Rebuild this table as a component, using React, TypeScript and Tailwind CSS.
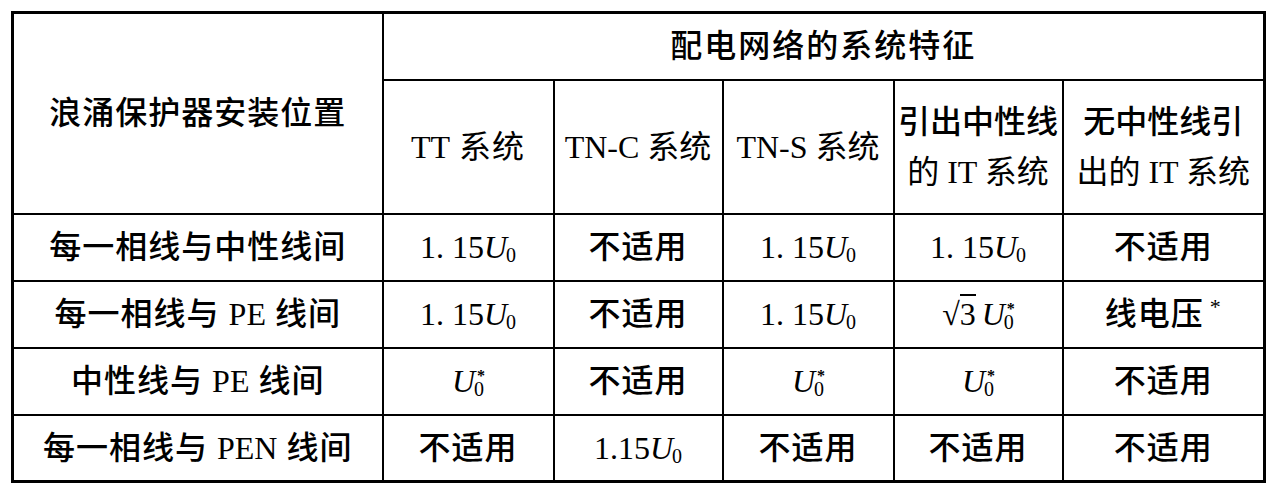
import type { ReactNode } from "react";

function U0({ star = false }: { star?: boolean }) {
  return (
    <span className="inline-flex items-end tracking-normal">
      <i className="italic">U</i>
      <span className="relative text-[20px] leading-none mb-[6px] -ml-[1px]">
        0
        {star && (
          <span className="absolute left-[3px] -top-[11px] text-[16px] font-bold leading-none">
            *
          </span>
        )}
      </span>
    </span>
  );
}

const NA = "不适用";
const V115 = (
  <span className="tracking-normal">
    1. 15
    <U0 />
  </span>
);

const rows: { label: ReactNode; cells: ReactNode[] }[] = [
  {
    label: "每一相线与中性线间",
    cells: [V115, NA, V115, V115, NA],
  },
  {
    label: (
      <>
        每一相线与 <span className="tracking-normal">PE</span> 线间
      </>
    ),
    cells: [
      V115,
      NA,
      V115,
      <span className="tracking-normal">
        <span>√</span>
        <span className="border-t-2 border-black leading-[1]">3</span>
        <span className="ml-[6px]">
          <U0 star />
        </span>
      </span>,
      <>
        线电压<span className="ml-[6px] text-[22px] align-top">*</span>
      </>,
    ],
  },
  {
    label: (
      <>
        中性线与 <span className="tracking-normal">PE</span> 线间
      </>
    ),
    cells: [<U0 star />, NA, <U0 star />, <U0 star />, NA],
  },
  {
    label: (
      <>
        每一相线与 <span className="tracking-normal">PEN</span> 线间
      </>
    ),
    cells: [
      NA,
      <span className="tracking-normal">
        1.15
        <U0 />
      </span>,
      NA,
      NA,
      NA,
    ],
  },
];

export default function App() {
  const cell = "border-2 border-black text-center align-middle p-0 whitespace-nowrap";
  return (
    <div
      className="w-[1274px] h-[493px] bg-white pt-[11px] pl-[11px] text-black text-[32px] tracking-[1px]"
      style={{ fontFamily: '"Liberation Serif", "Noto Sans CJK SC", serif' }}
    >
      <table className="border-collapse border-[3px] border-black table-fixed w-[1252px]">
        <colgroup>
          <col className="w-[370px]" />
          <col className="w-[171px]" />
          <col className="w-[169px]" />
          <col className="w-[171px]" />
          <col className="w-[169px]" />
          <col className="w-[202px]" />
        </colgroup>
        <thead>
          <tr className="h-[67px]">
            <th rowSpan={2} className={`${cell} font-medium`}>
              浪涌保护器安装位置
            </th>
            <th colSpan={5} className={`${cell} font-medium tracking-[2px]`}>
              配电网络的系统特征
            </th>
          </tr>
          <tr className="h-[134px]">
            <th className={`${cell} font-normal`}>
              <span className="tracking-normal">TT</span> 系统
            </th>
            <th className={`${cell} font-normal tracking-normal`}>TN-C 系统</th>
            <th className={`${cell} font-normal tracking-normal`}>TN-S 系统</th>
            <th className={`${cell} font-normal leading-[50px] tracking-normal`}>
              <span className="font-medium">引出中性线</span>
              <br />的 IT 系统
            </th>
            <th className={`${cell} font-normal leading-[50px] tracking-normal`}>
              <span className="font-medium">无中性线引</span>
              <br />出的 IT 系统
            </th>
          </tr>
        </thead>
        <tbody>
          {rows.map((r, i) => (
            <tr key={i} className="h-[67px]">
              <td className={`${cell} font-medium`}>{r.label}</td>
              {r.cells.map((c, j) => (
                <td key={j} className={`${cell} font-medium`}>
                  {c}
                </td>
              ))}
            </tr>
          ))}
        </tbody>
      </table>
    </div>
  );
}
